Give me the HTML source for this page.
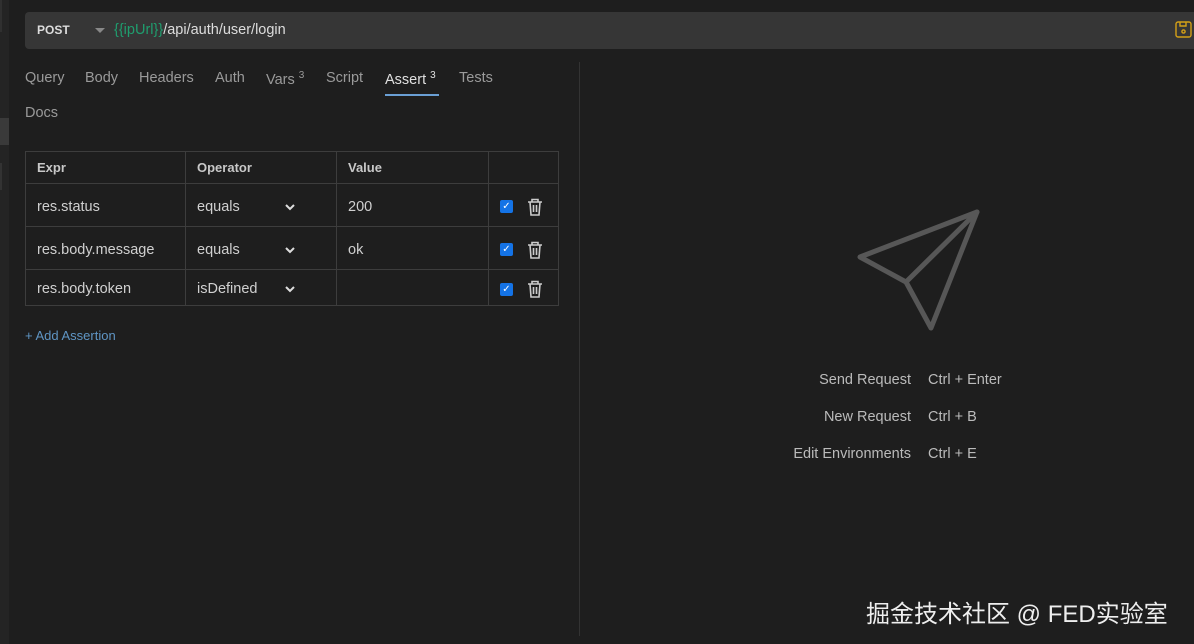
<!DOCTYPE html>
<html><head><meta charset="utf-8"><style>
*{margin:0;padding:0;box-sizing:border-box}
body{width:1194px;height:644px;background:#1e1e1e;font-family:"Liberation Sans",sans-serif;color:#ccc;position:relative;overflow:hidden}
.a{position:absolute}
.side{left:0;top:0;width:9px;height:644px;background:#242424}
.url{left:25px;top:12px;width:1169px;height:37px;background:#363636;border-radius:4px 0 0 4px}
.tab{top:70px;font-size:14.5px;color:#9a9a9a}
.tab sup{font-size:10px}
table{position:absolute;left:25px;top:151px;border-collapse:collapse;font-size:14.5px;color:#d0d0d0;table-layout:fixed}
td{border:1px solid #3d3d3d;padding:3px 11px 0;height:43px;line-height:16px}
th{border:1px solid #3d3d3d;text-align:left;font-size:13px;font-weight:bold;padding:0 11px;height:32px;color:#c8c8c8}
.cb{display:inline-block;width:13px;height:13px;background:#1473e6;border-radius:2px;vertical-align:middle;color:#fff;font-size:10px;line-height:13px;text-align:center}
.chev{float:right;margin-right:30px;margin-top:4px}
.tr{vertical-align:middle;margin-left:14px}
.k{font-size:14.5px;color:#bbb}
</style></head><body>
<div class="a side"></div>
<div class="a" style="left:0;top:0;width:2px;height:32px;background:#303030"></div>
<div class="a" style="left:0;top:118px;width:9px;height:27px;background:#3a3a3a"></div>
<div class="a" style="left:0;top:163px;width:2px;height:27px;background:#333"></div>
<div class="a url"></div>
<div class="a" style="left:37px;top:23px;font-size:12px;font-weight:bold;color:#ddd">POST</div>
<div class="a" style="left:95px;top:28px;width:0;height:0;border-left:5px solid transparent;border-right:5px solid transparent;border-top:5px solid #888"></div>
<div class="a" style="left:114px;top:22px;font-size:14.5px;color:#ddd"><span style="color:#1f9d6e">{{ipUrl}}</span>/api/auth/user/login</div>
<svg class="a" style="left:1175px;top:21px" width="17" height="17" viewBox="0 0 17 17" fill="none" stroke="#d4a017" stroke-width="1.4"><rect x="1" y="1" width="15" height="15" rx="2"/><path d="M5 1v4h6V1"/><circle cx="8.5" cy="10.5" r="1.6"/></svg>
<div class="a tab" style="left:25px">Query</div>
<div class="a tab" style="left:85px">Body</div>
<div class="a tab" style="left:139px">Headers</div>
<div class="a tab" style="left:215px">Auth</div>
<div class="a tab" style="left:266px">Vars <sup>3</sup></div>
<div class="a tab" style="left:326px">Script</div>
<div class="a tab" style="left:385px;color:#e0e0e0">Assert <sup>3</sup></div>
<div class="a" style="left:385px;top:94px;width:54px;height:2px;background:#6a9fd4"></div>
<div class="a tab" style="left:459px">Tests</div>
<div class="a tab" style="left:25px;top:105px">Docs</div>
<div class="a" style="left:579px;top:62px;width:1px;height:574px;background:#333"></div>
<table>
<colgroup><col style="width:160px"><col style="width:151px"><col style="width:152px"><col style="width:70px"></colgroup>
<tr><th>Expr</th><th>Operator</th><th>Value</th><th></th></tr>
<tr><td>res.status</td><td>equals<svg class="chev" width="10" height="8"><path d="M1 2l4 4 4-4" fill="none" stroke="#ddd" stroke-width="2"/></svg></td><td>200</td><td><span class="cb">✓</span><svg class="tr" width="16" height="18" viewBox="0 0 16 18" fill="none" stroke="#ccc" stroke-width="1.6"><path d="M1 4h14M5 4V1.5h6V4M3 4l1 13h8l1-13M6.5 7v7M9.5 7v7"/></svg></td></tr>
<tr><td>res.body.message</td><td>equals<svg class="chev" width="10" height="8"><path d="M1 2l4 4 4-4" fill="none" stroke="#ddd" stroke-width="2"/></svg></td><td>ok</td><td><span class="cb">✓</span><svg class="tr" width="16" height="18" viewBox="0 0 16 18" fill="none" stroke="#ccc" stroke-width="1.6"><path d="M1 4h14M5 4V1.5h6V4M3 4l1 13h8l1-13M6.5 7v7M9.5 7v7"/></svg></td></tr>
<tr><td style="height:36px">res.body.token</td><td style="height:36px">isDefined<svg class="chev" width="10" height="8"><path d="M1 2l4 4 4-4" fill="none" stroke="#ddd" stroke-width="2"/></svg></td><td style="height:36px"></td><td style="height:36px"><span class="cb">✓</span><svg class="tr" width="16" height="18" viewBox="0 0 16 18" fill="none" stroke="#ccc" stroke-width="1.6"><path d="M1 4h14M5 4V1.5h6V4M3 4l1 13h8l1-13M6.5 7v7M9.5 7v7"/></svg></td></tr>
</table>
<div class="a" style="left:25px;top:328px;font-size:13px;color:#5f95c4">+ Add Assertion</div>
<svg class="a" style="left:0;top:0" width="1194" height="644"><g fill="none" stroke="#575757" stroke-width="5" stroke-linejoin="round" stroke-linecap="round"><path d="M977 212L860 257L906 282L931 328Z"/><path d="M906 282L977 212"/></g></svg>
<div class="a k" style="right:283px;top:372px">Send Request</div><div class="a k" style="left:928px;top:372px">Ctrl + Enter</div>
<div class="a k" style="right:283px;top:409px">New Request</div><div class="a k" style="left:928px;top:409px">Ctrl + B</div>
<div class="a k" style="right:283px;top:446px">Edit Environments</div><div class="a k" style="left:928px;top:446px">Ctrl + E</div>
<div class="a" style="left:866px;top:594px;font-size:24px;color:#eee;font-family:'Liberation Sans','Noto Sans CJK SC',sans-serif">掘金技术社区 @ FED实验室</div>
</body></html>
